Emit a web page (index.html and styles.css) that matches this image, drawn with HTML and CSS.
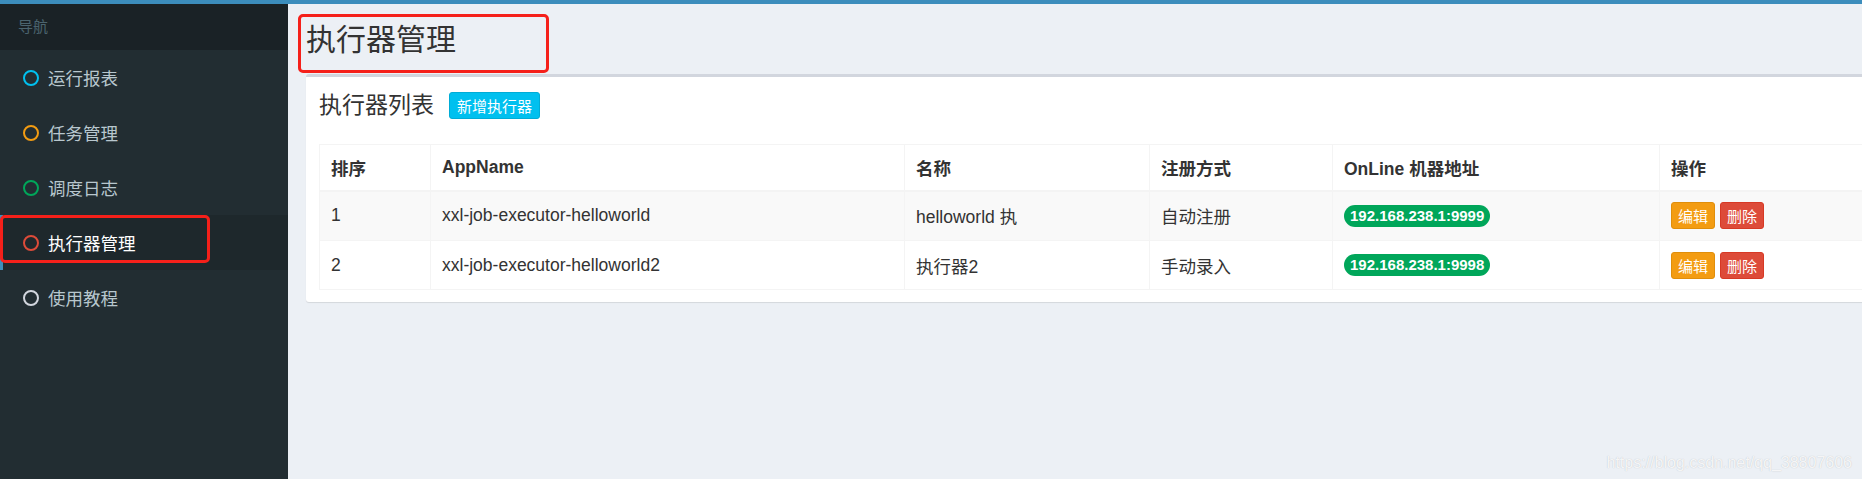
FILE: index.html
```html
<!DOCTYPE html>
<html lang="zh-CN">
<head>
    <meta charset="UTF-8">
    <title>执行器管理</title>
    <link rel="stylesheet" href="styles.css">
</head>
<body>
    <div class="topbar"></div>

    <div class="wrapper">
        <aside class="sidebar">
            <div class="nav-header">导航</div>
            <ul class="menu">
                <li><span class="dot aqua"></span>运行报表</li>
                <li><span class="dot yellow"></span>任务管理</li>
                <li><span class="dot green"></span>调度日志</li>
                <li class="active"><span class="dot red"></span>执行器管理<span class="mark mark-menu"></span></li>
                <li><span class="dot gray"></span>使用教程</li>
            </ul>
        </aside>

        <main class="content">
            <div class="content-header">
                <h1>执行器管理</h1>
                <span class="mark mark-title"></span>
            </div>

            <section class="box">
                <div class="box-header">
                    <h3>执行器列表</h3>
                    <button class="btn btn-info">新增执行器</button>
                </div>
                <div class="box-body">
                    <table class="table">
                        <colgroup>
                            <col style="width: 111px">
                            <col style="width: 474px">
                            <col style="width: 245px">
                            <col style="width: 183px">
                            <col style="width: 327px">
                            <col>
                        </colgroup>
                        <thead>
                            <tr>
                                <th>排序</th>
                                <th>AppName</th>
                                <th>名称</th>
                                <th>注册方式</th>
                                <th>OnLine 机器地址</th>
                                <th>操作</th>
                            </tr>
                        </thead>
                        <tbody>
                            <tr>
                                <td>1</td>
                                <td>xxl-job-executor-helloworld</td>
                                <td>helloworld 执</td>
                                <td>自动注册</td>
                                <td><span class="badge">192.168.238.1:9999</span></td>
                                <td class="ops">
                                    <button class="btn btn-warning">编辑</button>
                                    <button class="btn btn-danger">删除</button>
                                </td>
                            </tr>
                            <tr>
                                <td>2</td>
                                <td>xxl-job-executor-helloworld2</td>
                                <td>执行器2</td>
                                <td>手动录入</td>
                                <td><span class="badge">192.168.238.1:9998</span></td>
                                <td class="ops">
                                    <button class="btn btn-warning">编辑</button>
                                    <button class="btn btn-danger">删除</button>
                                </td>
                            </tr>
                        </tbody>
                    </table>
                </div>
            </section>

            <div class="watermark">https://blog.csdn.net/qq_38807606</div>
        </main>
    </div>
</body>
</html>
```

FILE: styles.css
```css
* {
    box-sizing: border-box;
}

body {
    margin: 0;
    width: 1862px;
    height: 479px;
    overflow: hidden;
    font-family: "Liberation Sans", "Noto Sans CJK SC", sans-serif;
    font-size: 17.5px;
    color: #333;
    background: #ecf0f5;
}

.topbar {
    height: 4px;
    background: #3c8dbc;
}

.wrapper {
    display: flex;
    height: 475px;
}

/* sidebar */
.sidebar {
    width: 288px;
    flex-shrink: 0;
    background: #222d32;
}

.nav-header {
    height: 46px;
    line-height: 46px;
    padding-left: 18px;
    font-size: 15px;
    color: #4b646f;
    background: #1a2226;
}

.menu {
    list-style: none;
    margin: 0;
    padding: 0;
}

.menu li {
    position: relative;
    display: flex;
    align-items: center;
    height: 55px;
    padding-left: 23px;
    color: #b8c7ce;
    font-size: 17.5px;
}

.menu li.active {
    background: #1e282c;
    color: #fff;
    border-left: 3px solid #3c8dbc;
    padding-left: 20px;
}

.dot {
    width: 16px;
    height: 16px;
    margin-right: 9px;
    border: 2.5px solid;
    border-radius: 50%;
}

.aqua { border-color: #00c0ef; }
.yellow { border-color: #f39c12; }
.green { border-color: #00a65a; }
.red { border-color: #dd4b39; }
.gray { border-color: #d2d6de; }

/* red annotation frames drawn over the screenshot */
.mark {
    position: absolute;
    border: 3px solid #f5201a;
    border-radius: 5px;
}

.mark-menu {
    left: -3px;
    top: 0;
    width: 210px;
    height: 48px;
}

.mark-title {
    left: 10px;
    top: 10px;
    width: 251px;
    height: 59px;
}

/* content */
.content {
    position: relative;
    flex: 1;
    padding: 0 0 0 18px;
    overflow: hidden;
}

.content-header {
    position: relative;
    height: 70px;
    margin-left: -18px;
    padding: 19px 0 0 18px;
}

.content-header h1 {
    margin: 0;
    font-size: 30px;
    font-weight: normal;
    line-height: 34px;
}

.box {
    width: 1620px;
    background: #fff;
    border-top: 3px solid #d2d6de;
    border-radius: 3px;
    box-shadow: 0 1px 1px rgba(0,0,0,0.1);
}

.box-header {
    display: flex;
    align-items: center;
    gap: 15px;
    padding: 15px 13px 0;
}

.box-header h3 {
    margin: 0;
    font-size: 23px;
    font-weight: normal;
    line-height: 27px;
}

.box-body {
    padding: 25px 13px 12px;
}

.btn {
    height: 27px;
    padding: 0 7px;
    font-family: inherit;
    font-size: 15px;
    color: #fff;
    border: 1px solid transparent;
    border-radius: 3px;
}

.btn-info {
    background: #00c0ef;
    border-color: #00acd6;
}

.btn-warning {
    background: #f39c12;
    border-color: #e08e0b;
}

.btn-danger {
    background: #dd4b39;
    border-color: #d73925;
}

.ops .btn {
    padding: 0 6px;
}

.table {
    width: 100%;
    table-layout: fixed;
    border-collapse: collapse;
    border: 1px solid #f4f4f4;
}

.table th,
.table td {
    padding: 0 11px;
    text-align: left;
    border: 1px solid #f4f4f4;
    white-space: nowrap;
}

.table thead tr {
    height: 46px;
}

.table th {
    font-weight: bold;
    border-bottom-width: 2px;
}

.table tbody tr {
    height: 50px;
}

.table tbody tr:last-child {
    height: 49px;
}

.table tbody tr:nth-child(odd) {
    background: #f9f9f9;
}

.badge {
    display: inline-block;
    height: 22px;
    line-height: 22px;
    padding: 0 6px;
    font-size: 15px;
    font-weight: bold;
    color: #fff;
    background: #00a65a;
    border-radius: 11px;
}

.watermark {
    position: absolute;
    right: 10px;
    bottom: 7px;
    font-size: 16px;
    color: rgba(255,255,255,0.85);
    text-shadow: 0 0 1px #b8bcc2;
}
```
